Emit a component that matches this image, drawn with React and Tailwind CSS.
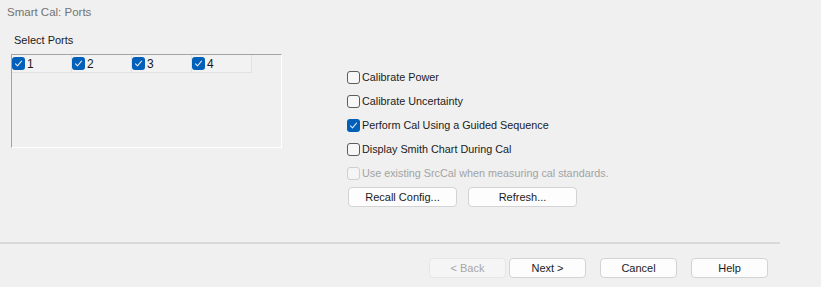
import React from "react";

function Box({ checked, disabled }) {
  if (checked) {
    return (
      <span className="w-[13px] h-[13px] rounded-[3px] bg-[#005fb8] flex items-center justify-center shrink-0">
        <svg width="9" height="9" viewBox="0 0 9 9" fill="none">
          <path d="M1.5 4.8l2 2 4-4.6" stroke="#dbe9f7" strokeWidth="1.1" strokeLinecap="round" strokeLinejoin="round" />
        </svg>
      </span>
    );
  }
  return (
    <span
      className={
        "w-[13px] h-[13px] rounded-[3px] border shrink-0 " +
        (disabled ? "border-[#cfcfcf] bg-[#f5f5f5]" : "border-[#5c5c5c] bg-[#f7f7f7]")
      }
    />
  );
}

function Option({ label, checked, disabled }) {
  return (
    <div className="h-[24px] flex items-center gap-[2px]">
      <Box checked={checked} disabled={disabled} />
      <span className={disabled ? "text-[#a3a3a3]" : "text-[#1b1b1b]"}>{label}</span>
    </div>
  );
}

function Btn({ children, disabled, w = "w-[77px]" }) {
  return (
    <button
      className={
        w +
        " h-[20px] rounded-[4px] border flex items-center justify-center text-[11px] " +
        (disabled
          ? "border-[#e6e6e6] bg-[#f5f5f5] text-[#a6a6a6]"
          : "border-[#d3d3d3] bg-[#fdfdfd] text-[#1b1b1b]")
      }
    >
      {children}
    </button>
  );
}

export default function App() {
  const ports = ["1", "2", "3", "4"];
  return (
    <div
      className="w-[821px] h-[287px] bg-[#f0f0f0] flex flex-col overflow-hidden"
      style={{ fontFamily: '"Liberation Sans", Arial, sans-serif' }}
    >
      <div className="h-[26px] pl-[7px] flex items-center text-[11.5px] text-[#727272]">
        Smart Cal: Ports
      </div>

      <div className="h-[216px] flex text-[10.8px]">
        <div className="pl-[11px]">
          <div className="pt-[8px] pl-[3px] h-[28px] leading-[13px] text-[11px] text-[#1a1a1a]">Select Ports</div>
          <div className="w-[271px] h-[94px] border-t border-l border-t-[#a3a3a3] border-l-[#a3a3a3] border-r border-b border-r-white border-b-white">
            <div className="flex">
              {ports.map((p) => (
                <div
                  key={p}
                  className="w-[60px] h-[18px] border-r border-b border-[#e2e2e2] flex items-center gap-[2px] bg-[#f2f2f2]"
                >
                  <Box checked />
                  <span className="text-[#1b1b1b] text-[12px]">{p}</span>
                </div>
              ))}
            </div>
          </div>
        </div>

        <div className="ml-[65px] pt-[39px] flex flex-col">
          <Option label="Calibrate Power" />
          <Option label="Calibrate Uncertainty" />
          <Option label="Perform Cal Using a Guided Sequence" checked />
          <Option label="Display Smith Chart During Cal" />
          <Option label="Use existing SrcCal when measuring cal standards." disabled />
          <div className="flex gap-[11px] mt-[2px] pl-[1px]">
            <Btn w="w-[109px]">Recall Config...</Btn>
            <Btn w="w-[109px]">Refresh...</Btn>
          </div>
        </div>
      </div>

      <div className="w-[780px] h-[2px] bg-[#d9d9d9]" />

      <div className="pt-[14px] pl-[429px] flex">
        <Btn disabled>&lt; Back</Btn>
        <div className="ml-[3px]">
          <Btn>Next &gt;</Btn>
        </div>
        <div className="ml-[14px]">
          <Btn>Cancel</Btn>
        </div>
        <div className="ml-[14px]">
          <Btn>Help</Btn>
        </div>
      </div>
    </div>
  );
}
